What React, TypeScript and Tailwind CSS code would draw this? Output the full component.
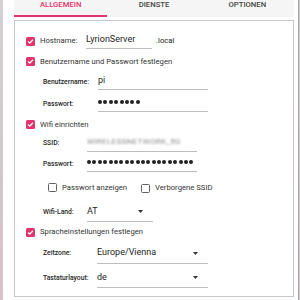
import React from 'react'

function Check({ on }: { on?: boolean }) {
  if (on) {
    return (
      <span className="flex h-[9px] w-[9px] shrink-0 items-center justify-center rounded-[1.5px] bg-[#e2336a]">
        <svg width="7" height="7" viewBox="0 0 7 7">
          <path d="M1.1 3.5 L2.8 5.1 L5.9 1.7" fill="none" stroke="white" strokeWidth="1.3" />
        </svg>
      </span>
    )
  }
  return <span className="h-[9px] w-[9px] shrink-0 rounded-[1.5px] border-[1.3px] border-[#626262]" />
}

function Arrow() {
  return (
    <svg width="5" height="3" viewBox="0 0 5 3" className="shrink-0">
      <path d="M0 0 H5 L2.5 3 Z" fill="#333" />
    </svg>
  )
}

function Dots({ n }: { n: number }) {
  return (
    <span className="flex gap-[1.4px]" aria-label="password">
      {Array.from({ length: n }).map((_, i) => (
        <span key={i} className="h-[4px] w-[4px] rounded-full bg-[#222]" />
      ))}
    </span>
  )
}

function Field({ w, children }: { w: string; children: React.ReactNode }) {
  return (
    <div className={`flex flex-col ${w}`}>
      <div className="flex h-[12px] items-center text-[9px] leading-[12px] text-[#1e1e1e]">{children}</div>
      <div className="mt-[3px] h-px bg-[#bdbdbd]" />
    </div>
  )
}

function Combo({ w, value }: { w: string; value: string }) {
  return (
    <div className={`flex h-[20px] items-center justify-between border-b border-[#bdbdbd] pr-[10px] ${w}`}>
      <span className="text-[9px] text-[#1e1e1e]">{value}</span>
      <Arrow />
    </div>
  )
}

function SubLabel({ w, children }: { w: string; children: React.ReactNode }) {
  return <span className={`shrink-0 text-[6.8px] font-medium text-[#262626] ${w}`}>{children}</span>
}

export default function App() {
  const tabs = ['ALLGEMEIN', 'DIENSTE', 'OPTIONEN']

  return (
    <div className="flex h-[300px] w-[300px] overflow-hidden bg-white" style={{ fontFamily: 'Roboto, "Liberation Sans", sans-serif' }}>
      <div className="w-[3px] bg-gradient-to-b from-[#d4d0d2] via-[#cfc9cc] to-[#d9c3cc]" />
      <div className="flex flex-1 flex-col bg-white pl-[11px] pr-[4px]">
        {/* tab bar */}
        <div className="flex h-[17px] bg-[#f5f5f5]">
          {tabs.map((t, i) => (
            <div
              key={t}
              className={`flex flex-1 justify-center border-b-2 text-[7.7px] font-medium leading-[9px] ${
                i === 0 ? 'border-[#e2336a] text-[#e2336a]' : 'border-transparent text-[#444]'
              }`}
            >
              {t}
            </div>
          ))}
        </div>

        {/* content frame */}
        <div className="mt-[3px] flex h-[277px] flex-col border border-[#c8c8c8] px-[11px] pt-[9px] text-[7.7px] text-[#333]">
          <div className="flex h-[22px] items-center">
            <Check on />
            <span className="ml-[5px] w-[46px] shrink-0">Hostname:</span>
            <Field w="w-[66px]">LyrionServer</Field>
            <span className="ml-[4px] text-[7.7px] text-[#222]">.local</span>
          </div>

          <div className="flex h-[19px] items-center">
            <Check on />
            <span className="ml-[5px]">Benutzername und Passwort festlegen</span>
          </div>

          <div className="flex h-[22px] items-center pl-[17px]">
            <SubLabel w="w-[55px]">Benutzername:</SubLabel>
            <Field w="w-[110px]">pi</Field>
          </div>

          <div className="flex h-[22px] items-center pl-[17px]">
            <SubLabel w="w-[55px]">Passwort:</SubLabel>
            <Field w="w-[110px]">
              <Dots n={8} />
            </Field>
          </div>

          <div className="flex h-[19px] items-center">
            <Check on />
            <span className="ml-[5px]">Wifi einrichten</span>
          </div>

          <div className="flex h-[19px] items-center pl-[17px]">
            <SubLabel w="w-[44px]">SSID:</SubLabel>
            <Field w="w-[110px]">
              <span className="text-[8px] tracking-[0.3px] text-[#8c8c8c] blur-[0.9px]">WIRELESSNETWORK_5G</span>
            </Field>
          </div>

          <div className="flex h-[22px] items-center pl-[17px]">
            <SubLabel w="w-[44px]">Passwort:</SubLabel>
            <Field w="w-[110px]">
              <Dots n={20} />
            </Field>
          </div>

          <div className="flex h-[26px] items-center pl-[22px]">
            <div className="flex w-[93px] items-center">
              <Check />
              <span className="ml-[5px]">Passwort anzeigen</span>
            </div>
            <Check />
            <span className="ml-[5px]">Verborgene SSID</span>
          </div>

          <div className="flex h-[22px] items-center pl-[17px]">
            <SubLabel w="w-[44px]">Wifi-Land:</SubLabel>
            <Combo w="w-[66px]" value="AT" />
          </div>

          <div className="flex h-[18px] items-center">
            <Check on />
            <span className="ml-[5px]">Spracheinstellungen festlegen</span>
          </div>

          <div className="flex h-[25px] items-center pl-[17px]">
            <SubLabel w="w-[54px]">Zeitzone:</SubLabel>
            <Combo w="w-[111px]" value="Europe/Vienna" />
          </div>

          <div className="flex h-[24px] items-center pl-[17px]">
            <SubLabel w="w-[54px]">Tastaturlayout:</SubLabel>
            <Combo w="w-[111px]" value="de" />
          </div>
        </div>
      </div>
      <div className="flex w-[2px]">
        <div className="w-px bg-[#a8a8a8]" />
        <div className="w-px bg-gradient-to-b from-[#cfcbcd] via-[#d0cacd] to-[#d8c2cb]" />
      </div>
    </div>
  )
}
